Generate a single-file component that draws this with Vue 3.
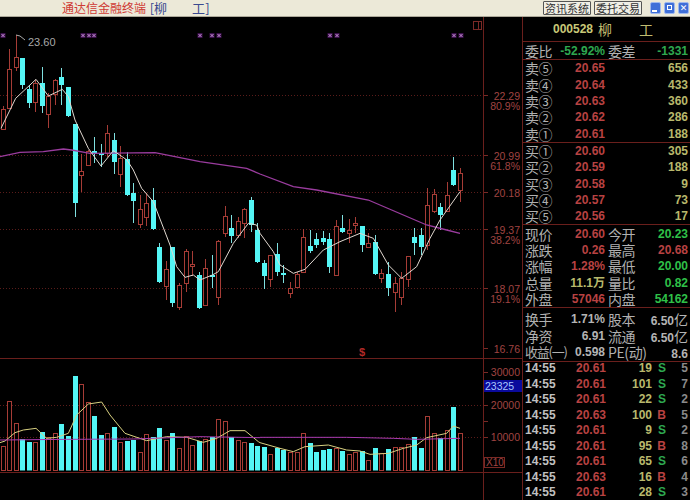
<template>
  <div class="app">
    <header class="titlebar">
      <div class="title">通达信金融终端 <span class="title-stock">[柳<span class="name-gap">工</span>]</span></div>
      <div class="tools">
        <button class="tool">资讯系统</button>
        <button class="tool">委托交易</button>
        <div class="winbtns">
          <span class="winbtn"><i class="min" /></span>
          <span class="winbtn"><i class="restore" /></span>
          <span class="winbtn close">✕</span>
        </div>
      </div>
    </header>

    <main class="body">
      <svg class="chart" width="522" height="483" viewBox="0 17 522 483">
        <!-- frame -->
        <g class="frame">
          <line x1="483.5" y1="17" x2="483.5" y2="500" />
          <line x1="0" y1="358.5" x2="522" y2="358.5" />
          <line x1="0" y1="472.5" x2="522" y2="472.5" />
        </g>
        <rect x="473.5" y="21.5" width="8" height="8" class="corner" />
        <line x1="478.5" y1="21.5" x2="478.5" y2="29.5" class="corner" />

        <g class="grid">
          <line v-for="y in gridY" :key="y" x1="0" :y1="y + 0.5" x2="483" :y2="y + 0.5" />
        </g>
        <g class="ticks">
          <line v-for="y in tickY" :key="y" x1="484" :y1="y + 0.5" x2="488" :y2="y + 0.5" />
        </g>

        <!-- top markers -->
        <g v-for="x in markers" :key="x">
          <rect :x="x - 2.5" y="33" width="5" height="5" class="marker-glow" />
          <path :d="`M${x - 1.5} 34l3 3m0 -3l-3 3`" class="marker" />
        </g>

        <!-- candles -->
        <g v-for="c in candleShapes" :key="c.i">
          <line :x1="c.x" :x2="c.x" :y1="c.hi" :y2="c.lo" :class="c.up ? 'wick-up' : 'wick-down'" />
          <rect v-if="c.up" :x="c.x - 2" :y="c.top + 0.5" width="4" :height="c.h" class="body-up" />
          <rect v-else :x="c.x - 2.5" :y="c.top" width="5" :height="c.h" class="body-down" />
        </g>

        <polyline :points="maLong" class="line-purple" />
        <polyline :points="maShort" class="line-white" />

        <polyline points="16,35 20,36 25,40" class="leader" />
        <text x="28" y="46" class="peak">23.60</text>
        <text x="362" y="356" class="smark">$</text>

        <!-- axis -->
        <text v-for="a in axis" :key="a.t" x="520" :y="a.y" class="axis">{{ a.t }}</text>

        <!-- volume -->
        <g v-for="v in volumeShapes" :key="v.i">
          <rect v-if="v.up" :x="v.x - 2" :y="v.top + 0.5" width="4" :height="470 - v.top" class="body-up" />
          <rect v-else :x="v.x - 2.5" :y="v.top" width="5" :height="470.5 - v.top" class="body-down" />
        </g>
        <polyline :points="volYellow" class="line-yellow" />
        <polyline :points="volPurple" class="line-magenta" />

        <rect x="484" y="380" width="38" height="12" class="tag" />
        <text x="485" y="390" class="tag-text">23325</text>
        <rect x="484.5" y="457.5" width="20" height="10" class="corner" />
        <text x="486" y="466" class="x10">X10</text>
      </svg>

      <aside class="panel">
        <section class="head">
          <span class="code">000528</span>
          <span class="name">柳</span>
          <span class="name second">工</span>
        </section>

        <section class="ratio row">
          <span class="lab">委比</span>
          <span class="num green">-52.92%</span>
          <span class="lab lab2">委差</span>
          <span class="num green">-1331</span>
        </section>

        <section class="quotes">
          <div v-for="q in sells" :key="q.l" class="row quote">
            <span class="lab">{{ q.l }}</span>
            <span class="num red">{{ q.p }}</span>
            <span class="num yellow">{{ q.v }}</span>
          </div>
        </section>
        <section class="quotes">
          <div v-for="q in buys" :key="q.l" class="row quote">
            <span class="lab">{{ q.l }}</span>
            <span class="num red">{{ q.p }}</span>
            <span class="num yellow">{{ q.v }}</span>
          </div>
        </section>

        <section class="quotes">
          <div v-for="s in stats" :key="s.a" class="row">
            <span class="lab">{{ s.a }}</span>
            <span class="num" :class="s.ac">{{ s.av }}</span>
            <span class="lab lab2">{{ s.b }}</span>
            <span class="num" :class="s.bc">{{ s.bv }}</span>
          </div>
        </section>

        <section class="quotes fin">
          <div v-for="s in fins" :key="s.a" class="row">
            <span class="lab" :class="{ tight: s.a.length > 2 }">{{ s.a }}</span>
            <span class="num grey">{{ s.av }}</span>
            <span class="lab lab2">{{ s.b }}</span>
            <span class="num grey">{{ s.bv }}<em class="unit">{{ s.u }}</em></span>
          </div>
        </section>

        <section class="trades">
          <div v-for="(t, i) in trades" :key="i" class="trade">
            <span class="time">14:55</span>
            <span class="num red">{{ t[0] }}</span>
            <span class="num yellow">{{ t[1] }}</span>
            <span class="side" :class="t[2] === 'S' ? 'green' : 'red'">{{ t[2] }}</span>
            <span class="num dim">{{ t[3] }}</span>
          </div>
        </section>
      </aside>
    </main>
  </div>
</template>

<script setup>
// hi, bodyTop, bodyBottom, lo, up
const candles = [
  [106, 109, 129, 130, 1], [49, 69, 108, 108, 1], [35, 57, 67, 71, 1], [58, 58, 85, 89, 0],
  [85, 89, 103, 108, 0], [80, 83, 102, 112, 1], [67, 83, 106, 113, 0], [93, 96, 114, 128, 1],
  [79, 80, 94, 105, 1], [68, 77, 85, 105, 0], [87, 87, 116, 117, 0], [124, 124, 203, 217, 0],
  [154, 171, 175, 192, 1], [150, 151, 165, 166, 1], [137, 151, 154, 163, 0], [144, 153, 154, 167, 0],
  [125, 133, 153, 157, 1], [133, 140, 162, 174, 0], [146, 158, 174, 187, 1], [152, 159, 195, 196, 0],
  [183, 193, 201, 223, 0], [195, 209, 224, 228, 1], [193, 203, 217, 226, 1], [188, 200, 229, 230, 0],
  [243, 247, 282, 283, 0], [261, 269, 286, 300, 1], [247, 247, 303, 307, 0], [283, 285, 307, 310, 1],
  [249, 251, 283, 292, 1], [251, 264, 265, 276, 1], [272, 275, 308, 309, 0], [259, 268, 305, 306, 1],
  [255, 275, 276, 288, 0], [240, 241, 297, 305, 1], [206, 216, 233, 237, 1], [215, 228, 236, 243, 0],
  [217, 221, 235, 238, 1], [208, 209, 223, 238, 1], [197, 200, 225, 232, 0], [223, 230, 262, 263, 0],
  [260, 263, 276, 289, 0], [255, 255, 279, 287, 1], [243, 254, 272, 276, 0], [265, 273, 274, 283, 0],
  [282, 288, 293, 298, 1], [272, 274, 287, 288, 1], [229, 237, 272, 273, 1], [230, 246, 251, 253, 0],
  [233, 239, 245, 248, 0], [231, 238, 242, 245, 0], [233, 239, 267, 273, 0], [220, 226, 275, 275, 1],
  [215, 228, 232, 233, 0], [219, 230, 233, 243, 1], [217, 223, 225, 233, 1], [226, 226, 245, 252, 0],
  [233, 243, 247, 248, 1], [235, 242, 274, 275, 0], [269, 273, 278, 283, 1], [262, 274, 288, 296, 0],
  [277, 283, 292, 312, 1], [272, 278, 297, 305, 1], [256, 256, 279, 287, 1], [228, 237, 243, 255, 0],
  [228, 235, 247, 255, 0], [188, 205, 245, 250, 1], [189, 194, 211, 213, 1], [203, 207, 215, 230, 0],
  [182, 195, 211, 212, 1], [157, 170, 185, 186, 0], [168, 173, 190, 202, 1]
]

// bar tops read at 3x, measured from y=340
const volTops = [
  318, 182, 248, 298, 305, 305, 275, 290, 280, 253, 287, 108, 132, 185, 227, 285, 280, 262, 305, 302,
  300, 335, 282, 292, 264, 300, 280, 325, 288, 315, 303, 298, 292, 236, 244, 290, 300, 306, 310, 318,
  320, 343, 325, 330, 335, 335, 278, 310, 335, 330, 328, 325, 333, 343, 335, 332, 360, 325, 340, 328,
  320, 320, 312, 292, 325, 228, 280, 295, 270, 202, 280
]

const barX = (i) => Math.round(2.7 + 6.53 * i) + 0.5

const candleShapes = candles.map((c, i) => ({
  i,
  x: barX(i),
  hi: c[0],
  top: c[1],
  h: Math.max(c[2] - c[1], 2),
  lo: c[3],
  up: c[4] === 1
}))

const volumeShapes = volTops.map((t, i) => ({
  i,
  x: barX(i),
  top: Math.round(340 + t / 3),
  up: candles[i][4] === 1
}))

const scaled = (list, ox, oy) => list.map(([x, y]) => `${ox + x / 3},${oy + y / 3}`).join(" ")

const maShort = [
  scaled([[3, 385], [47, 295], [108, 238], [145, 288], [187, 268], [205, 290], [225, 360], [265, 445], [303, 498], [340, 452], [381, 480]], 0, 0),
  scaled([[400, 0], [425, 55], [460, 95], [510, 225], [530, 290], [555, 322], [580, 315], [600, 330], [637, 315], [655, 305], [700, 220], [745, 160], [770, 165]], 0, 170),
  scaled([[0, 190], [40, 245], [60, 285], [100, 310], [135, 298], [190, 240], [240, 215], [300, 190], [340, 205], [385, 285], [425, 325], [470, 290], [510, 205], [540, 150], [600, 65]], 260, 170)
].join(" ")

const maLong = [
  scaled([[0, 470], [60, 457], [130, 455], [190, 447], [215, 450], [270, 460], [465, 458], [600, 485], [740, 505]], 0, 0),
  scaled([[0, 12], [100, 50], [170, 60], [325, 90], [395, 120], [500, 165], [560, 180], [600, 190]], 260, 170)
].join(" ")

const volYellow = [
  scaled([[0, 308], [15, 303], [45, 278], [70, 270], [108, 265], [140, 295], [170, 292], [205, 280], [230, 225], [265, 192], [305, 186], [330, 225], [375, 280], [440, 302], [500, 290], [560, 292], [610, 307], [650, 295], [690, 272], [735, 272], [775, 305]], 0, 340),
  scaled([[0, 308], [60, 325], [100, 335], [135, 320], [205, 315], [260, 330], [300, 333], [330, 343], [385, 340], [430, 325], [470, 315], [500, 293], [560, 280], [580, 258], [600, 265]], 260, 340)
].join(" ")

const volPurple = [
  scaled([[0, 300], [200, 298], [400, 297], [600, 290], [780, 293]], 0, 340),
  scaled([[0, 292], [260, 292], [400, 295], [470, 298], [600, 295]], 260, 340)
].join(" ")

const gridY = [95, 155, 192, 229, 288, 405, 437]
const tickY = [95, 155, 192, 229, 288, 348, 372, 405, 421, 437]
const markers = [3, 83, 89, 94, 200, 212, 219, 330, 337, 454, 461]

const axis = [
  { t: "22.29", y: 100 }, { t: "80.9%", y: 110 },
  { t: "20.99", y: 160 }, { t: "61.8%", y: 170 },
  { t: "20.18", y: 197 },
  { t: "19.37", y: 234 }, { t: "38.2%", y: 244 },
  { t: "18.07", y: 293 }, { t: "19.1%", y: 303 },
  { t: "16.76", y: 353 },
  { t: "30000", y: 376 }, { t: "20000", y: 409 }, { t: "10000", y: 441 }
]

const sells = [
  { l: "卖⑤", p: "20.65", v: 656 }, { l: "卖④", p: "20.64", v: 433 }, { l: "卖③", p: "20.63", v: 360 },
  { l: "卖②", p: "20.62", v: 286 }, { l: "卖①", p: "20.61", v: 188 }
]
const buys = [
  { l: "买①", p: "20.60", v: 305 }, { l: "买②", p: "20.59", v: 188 }, { l: "买③", p: "20.58", v: 9 },
  { l: "买④", p: "20.57", v: 73 }, { l: "买⑤", p: "20.56", v: 17 }
]
const stats = [
  { a: "现价", av: "20.60", ac: "red", b: "今开", bv: "20.23", bc: "bright" },
  { a: "涨跌", av: "0.26", ac: "red", b: "最高", bv: "20.68", bc: "red" },
  { a: "涨幅", av: "1.28%", ac: "red", b: "最低", bv: "20.00", bc: "bright" },
  { a: "总量", av: "11.1万", ac: "yellow", b: "量比", bv: "0.82", bc: "bright" },
  { a: "外盘", av: "57046", ac: "red", b: "内盘", bv: "54162", bc: "bright" }
]
const fins = [
  { a: "换手", av: "1.71%", b: "股本", bv: "6.50", u: "亿" },
  { a: "净资", av: "6.91", b: "流通", bv: "6.50", u: "亿" },
  { a: "收益(一)", av: "0.598", b: "PE(动)", bv: "8.6", u: "" }
]
const trades = [
  ["20.61", 19, "S", 5], ["20.61", 101, "S", 7], ["20.61", 22, "S", 2],
  ["20.63", 100, "B", 5], ["20.61", 9, "S", 2], ["20.61", 95, "B", 8],
  ["20.61", 65, "S", 6], ["20.63", 16, "B", 4], ["20.61", 28, "S", 3]
]
</script>

<style>
html, body {
  margin: 0;
  background: #000;
}
</style>

<style scoped>
.app {
  width: 690px;
  height: 500px;
  overflow: hidden;
  background: #000;
  font-family: "Liberation Sans", "Noto Sans CJK SC", sans-serif;
}
.titlebar {
  display: flex;
  align-items: center;
  height: 16px;
  padding-left: 62px;
  background: #ece9d8;
  border-bottom: 1px solid #aca899;
}
.title {
  font: 12px/16px "Noto Sans CJK SC", sans-serif;
  color: #cf3a34;
  white-space: nowrap;
}
.title-stock {
  margin-left: 1px;
  color: #3a4a90;
  font-size: 13px;
}
.name-gap {
  margin-left: 25px;
}
.tools {
  display: flex;
  align-items: center;
  gap: 3px;
  margin-left: auto;
  padding-right: 1px;
}
.tool {
  box-sizing: border-box;
  width: 48px;
  height: 14px;
  padding: 0;
  border: 1px solid #555;
  border-radius: 1px;
  background: #f0efe6;
  color: #333;
  font: 11px/12px "Noto Sans CJK SC", sans-serif;
}
.winbtns {
  display: flex;
  gap: 3px;
  margin-left: 5px;
}
.winbtn {
  position: relative;
  box-sizing: border-box;
  display: block;
  width: 11px;
  height: 12px;
  border-radius: 2px;
  background: #3f6fd8;
  border: 1px solid #9fb8ee;
  color: #fff;
  font: 9px/10px "DejaVu Sans", sans-serif;
  text-align: center;
}
.winbtn .min {
  position: absolute;
  left: 1px;
  bottom: 1px;
  width: 5px;
  height: 2px;
  background: #fff;
}
.winbtn .restore {
  position: absolute;
  left: 2px;
  top: 2px;
  width: 5px;
  height: 5px;
  box-sizing: border-box;
  border: 1px solid #fff;
}
.body {
  display: flex;
  height: 483px;
}
.chart {
  flex: none;
  display: block;
}
.frame line {
  stroke: #6a1f1c;
  stroke-width: 1;
}
.grid line {
  stroke: #5a1c1a;
  stroke-dasharray: 1 2;
}
.ticks line {
  stroke: #7a2a26;
}
.corner {
  fill: none;
  stroke: #7a2a26;
}
.marker-glow {
  fill: #3a0f4a;
}
.marker {
  fill: none;
  stroke: #c890d8;
}
.wick-up {
  stroke: #a63c36;
}
.wick-down {
  stroke: #7fe0e0;
}
.body-up {
  fill: #000;
  stroke: #a63c36;
}
.body-down {
  fill: #54f6f6;
}
.line-purple {
  fill: none;
  stroke: #9a3c9e;
  stroke-width: 1.3;
}
.line-white {
  fill: none;
  stroke: #e0d8d0;
  stroke-width: 1;
  stroke-linejoin: round;
}
.line-yellow {
  fill: none;
  stroke: #d8d080;
  stroke-width: 1;
}
.line-magenta {
  fill: none;
  stroke: #a83cb0;
  stroke-width: 1;
}
.leader {
  fill: none;
  stroke: #aaa;
}
.peak {
  fill: #a8a8a8;
  font: 11px "Liberation Sans", sans-serif;
}
.smark {
  fill: #b42a28;
  font: bold 11px "Liberation Sans", sans-serif;
  text-anchor: middle;
}
.axis {
  fill: #a04442;
  font: 10.5px "Liberation Sans", sans-serif;
  text-anchor: end;
}
.tag {
  fill: #0a0a9c;
}
.tag-text {
  fill: #a8c4ff;
  font: 10.5px "Liberation Sans", sans-serif;
}
.x10 {
  fill: #a04442;
  font: 10px "Liberation Sans", sans-serif;
}
.panel {
  flex: none;
  box-sizing: border-box;
  width: 168px;
  padding: 0 2px;
  border-left: 1px solid #6a1f1c;
  overflow: hidden;
}
.panel section {
  margin: 0 -2px;
  padding: 0 2px;
  border-bottom: 1px solid #6a1f1c;
}
.head {
  display: flex;
  align-items: center;
  box-sizing: border-box;
  height: 25px;
  padding-left: 30px !important;
}
.code {
  width: 45px;
  color: #c8c878;
  font-weight: 700;
  font-size: 12px;
}
.name {
  color: #c0bc70;
  font: 14px "Noto Sans CJK SC", sans-serif;
}
.second {
  margin-left: 27px;
}
.row {
  display: grid;
  grid-template-columns: 28px 52px 31px 52px;
  align-items: center;
  height: 16.35px;
  white-space: nowrap;
}
.row.quote {
  grid-template-columns: 28px 52px 83px;
}
.ratio {
  height: 17px;
}
.fin {
  padding-top: 1px !important;
  padding-bottom: 3px !important;
}
.lab {
  color: #b0b0b0;
  font: 14px/16px "Noto Sans CJK SC", sans-serif;
  letter-spacing: -0.4px;
}
.lab.tight {
  font-size: 13px;
  letter-spacing: -1.2px;
}
.lab2 {
  padding-left: 3px;
}
.num {
  text-align: right;
  font-size: 12px;
  font-weight: 700;
  line-height: 14px;
}
.red {
  color: #b84242;
}
.green {
  color: #2ea850;
}
.bright {
  color: #2fc048;
}
.yellow {
  color: #b8b86c;
}
.grey {
  color: #b4b4b4;
}
.dim {
  color: #8a8a8a;
}
.unit {
  font: 14px "Noto Sans CJK SC", sans-serif;
}
.trades {
  display: flex;
  flex-direction: column;
  gap: 3.5px;
  border-bottom: 0 !important;
}
.trade {
  display: grid;
  grid-template-columns: 51px 30px 46px 14px 22px;
  height: 12px;
  align-items: center;
}
.time {
  color: #c0c0c0;
  font-size: 12px;
  font-weight: 700;
  line-height: 12px;
}
.trade .num {
  line-height: 12px;
}
.side {
  font-size: 12px;
  font-weight: 700;
  line-height: 12px;
  text-align: right;
}
</style>
